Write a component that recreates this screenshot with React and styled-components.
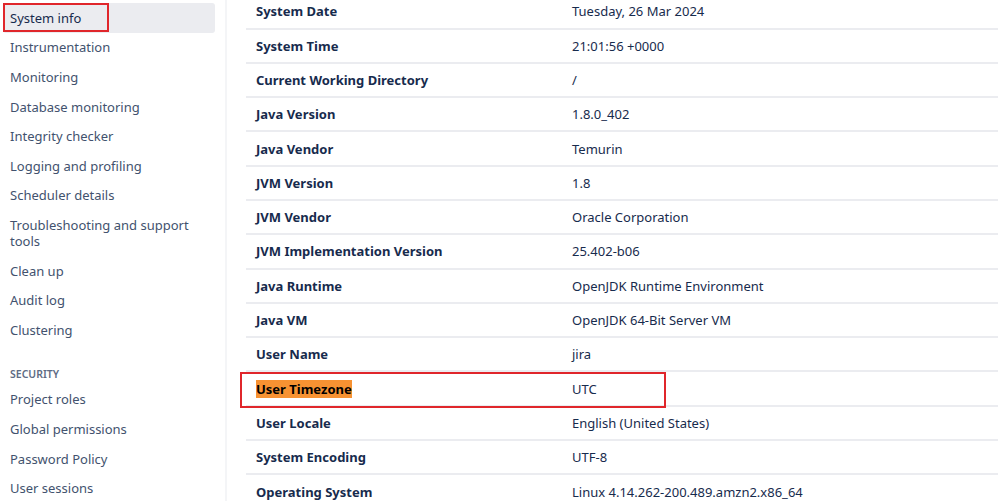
import React from "react";
import styled, { createGlobalStyle } from "styled-components";

const GlobalStyle = createGlobalStyle`
  html, body {
    margin: 0;
    padding: 0;
    background: #ffffff;
    overflow: hidden;
  }
  body {
    font-family: "Noto Sans", "Open Sans", sans-serif;
    color: #172b4d;
  }
`;

const Page = styled.div`
  display: flex;
  width: 998px;
  height: 501px;
  overflow: hidden;
`;

const Sidebar = styled.nav`
  width: 227px;
  flex-shrink: 0;
  padding: 3px 10px 0 3px;
  box-sizing: border-box;
  border-right: 2px solid #f4f5f7;
`;

const NavItem = styled.div`
  position: relative;
  padding: 6.8px 7px;
  font-size: 13px;
  line-height: 16px;
  color: ${(p) => (p.$active ? "#172b4d" : "#42526e")};
  background: ${(p) => (p.$active ? "#ebecf0" : "transparent")};
  border-radius: 3px;
`;

const Highlight = styled.span`
  position: absolute;
  left: 0;
  top: 0;
  width: 106px;
  height: 29px;
  border: 2px solid #e0262b;
  box-sizing: border-box;
`;

const NavHeading = styled.div`
  padding: 21px 7px 3px;
  font-size: 10.5px;
  line-height: 16px;
  font-weight: 600;
  color: #5e6c84;
  text-transform: uppercase;
`;

const Main = styled.main`
  flex: 1;
  padding-left: 19px;
  margin-top: -4.8px;
`;

const Row = styled.div`
  position: relative;
  display: grid;
  grid-template-columns: 326px 1fr;
  height: 34.3px;
  align-items: center;
  border-bottom: 2px solid #ebecf0;
  box-sizing: border-box;
  font-size: 13px;
  line-height: 20px;
`;

const Label = styled.div`
  padding-left: 10px;
  font-weight: 700;
  color: #172b4d;
  span {
    background: ${(p) => (p.$marked ? "#f79232" : "transparent")};
    color: ${(p) => (p.$marked ? "#000000" : "inherit")};
  }
`;

const Value = styled.div`
  color: #172b4d;
  white-space: nowrap;
`;

const Callout = styled.span`
  position: absolute;
  left: -6px;
  top: 0px;
  width: 426px;
  height: 36px;
  border: 2px solid #e0262b;
  box-sizing: border-box;
`;

const systemItems = [
  "System info",
  "Instrumentation",
  "Monitoring",
  "Database monitoring",
  "Integrity checker",
  "Logging and profiling",
  "Scheduler details",
  "Troubleshooting and support tools",
  "Clean up",
  "Audit log",
  "Clustering",
];

const securityItems = [
  "Project roles",
  "Global permissions",
  "Password Policy",
  "User sessions",
];

const rows = [
  ["System Date", "Tuesday, 26 Mar 2024"],
  ["System Time", "21:01:56 +0000"],
  ["Current Working Directory", "/"],
  ["Java Version", "1.8.0_402"],
  ["Java Vendor", "Temurin"],
  ["JVM Version", "1.8"],
  ["JVM Vendor", "Oracle Corporation"],
  ["JVM Implementation Version", "25.402-b06"],
  ["Java Runtime", "OpenJDK Runtime Environment"],
  ["Java VM", "OpenJDK 64-Bit Server VM"],
  ["User Name", "jira"],
  ["User Timezone", "UTC"],
  ["User Locale", "English (United States)"],
  ["System Encoding", "UTF-8"],
  ["Operating System", "Linux 4.14.262-200.489.amzn2.x86_64"],
];

export default function App() {
  return (
    <>
      <GlobalStyle />
      <Page>
        <Sidebar>
          {systemItems.map((item, i) => (
            <NavItem key={item} $active={i === 0}>
              {item}
              {i === 0 && <Highlight />}
            </NavItem>
          ))}
          <NavHeading>Security</NavHeading>
          {securityItems.map((item) => (
            <NavItem key={item}>{item}</NavItem>
          ))}
        </Sidebar>
        <Main>
          {rows.map(([label, value]) => {
            const marked = label === "User Timezone";
            return (
              <Row key={label}>
                <Label $marked={marked}>
                  <span>{label}</span>
                </Label>
                <Value>{value}</Value>
                {marked && <Callout />}
              </Row>
            );
          })}
        </Main>
      </Page>
    </>
  );
}
